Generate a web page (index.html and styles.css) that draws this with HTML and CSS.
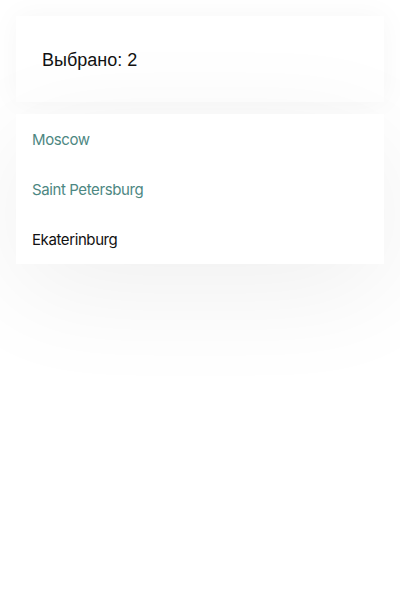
FILE: index.html
```html
<!DOCTYPE html>
<html lang="ru">
<head>
<meta charset="utf-8">
<link rel="stylesheet" href="styles.css">
</head>
<body>
<div class="page">
  <div class="header-card">
    <span class="count">Выбрано: 2</span>
  </div>
  <ul class="list-card">
    <li class="item selected">Moscow</li>
    <li class="item selected">Saint Petersburg</li>
    <li class="item">Ekaterinburg</li>
  </ul>
</div>
</body>
</html>
```
FILE: styles.css
```css
html, body {
  margin: 0;
  padding: 0;
  background: #ffffff;
}
.page {
  padding: 16px;
  min-height: 600px;
  box-sizing: border-box;
  display: flex;
  flex-direction: column;
  gap: 12px;
}
.header-card {
  background: #ffffff;
  height: 86px;
  flex: none;
  display: flex;
  align-items: center;
  padding: 0 26px;
  box-shadow: 0 0 30px rgba(0, 0, 0, 0.04);
}
.count {
  font-family: "Liberation Sans", Arial, sans-serif;
  font-size: 18px;
  color: #111111;
  position: relative;
  top: 1px;
}
.list-card {
  list-style: none;
  margin: 0;
  padding: 0;
  flex: none;
  background: #ffffff;
  box-shadow: 0 25px 115px rgba(0, 0, 0, 0.065);
}
.item {
  height: 50px;
  display: flex;
  align-items: center;
  padding: 0 16px;
  font-family: Inter, "Noto Sans", sans-serif;
  font-size: 15px;
  letter-spacing: -0.4px;
  color: #111111;
}
.item.selected {
  color: #4d8782;
}
```
